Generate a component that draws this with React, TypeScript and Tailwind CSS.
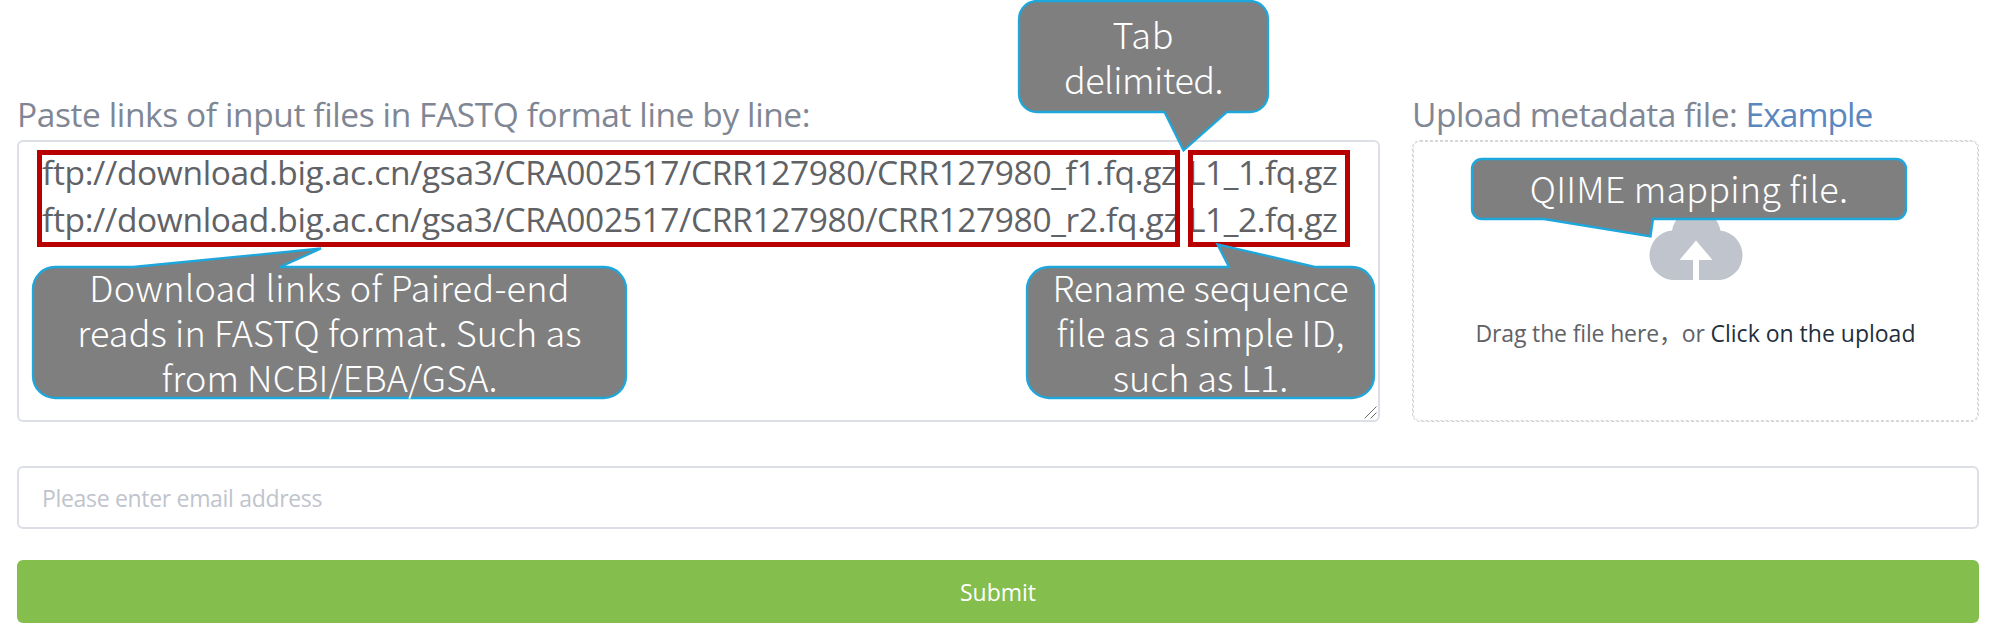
import React from "react";

type Line = { text: string; spacing?: string };

type CalloutProps = {
  frame: string;
  width: number;
  height: number;
  path: string;
  textClass: string;
  lines: Line[];
};

function Callout({ frame, width, height, path, textClass, lines }: CalloutProps) {
  return (
    <div className={`absolute ${frame}`}>
      <svg className="absolute left-0 top-0 overflow-visible" width={width} height={height}>
        <path d={path} fill="#7f7f7f" stroke="#1ea7dc" strokeWidth="2.3" />
      </svg>
      <div
        className={`relative flex flex-col items-center whitespace-nowrap font-['Noto_Sans_CJK_SC',sans-serif] text-[36px] font-light leading-[45px] text-white ${textClass}`}
      >
        {lines.map((l) => (
          <span key={l.text} className={l.spacing ?? ""}>
            {l.text}
          </span>
        ))}
      </div>
    </div>
  );
}

const rows = [
  ["ftp://download.big.ac.cn/gsa3/CRA002517/CRR127980/CRR127980_f1.fq.gz", "L1_1.fq.gz"],
  ["ftp://download.big.ac.cn/gsa3/CRA002517/CRR127980/CRR127980_r2.fq.gz", "L1_2.fq.gz"],
];

export default function App() {
  return (
    <div className="relative h-[636px] w-[2000px] overflow-hidden bg-white pl-[17px] pr-[21px] pt-[91px] font-['Open_Sans','Noto_Sans_CJK_SC',sans-serif] text-[#606266]">
      <div className="flex justify-between">
        <section className="w-[1363px]">
          <h2 className="mb-[2px] h-[47px] whitespace-nowrap text-[33.5px] leading-[47px] tracking-[-0.4px] text-[#7f8694]">
            Paste links of input files in FASTQ format line by line:
          </h2>
          <div className="relative h-[282px] rounded-[6px] border-2 border-[#dcdfe6] pl-[23px] pt-[6.5px] text-[33.5px] leading-[47.3px] tracking-[-0.36px]">
            {rows.map(([url, name]) => (
              <div key={url} className="flex whitespace-nowrap">
                <span className="w-[1146px]">{url}</span>
                <span className="tracking-[-0.45px]">{name}</span>
              </div>
            ))}
            <svg className="absolute bottom-0 right-0" width="15" height="15" viewBox="0 0 15 15">
              <path d="M1.5 13.5 13.5 1.5M7.5 13.5l6-6" stroke="#6b6b6b" strokeWidth="1" fill="none" />
            </svg>
          </div>
        </section>

        <section className="w-[567px]">
          <h2 className="mb-[2px] h-[47px] whitespace-nowrap text-[33.5px] leading-[47px] tracking-[-0.5px] text-[#7f8694]">
            Upload metadata file: <a className="tracking-[-0.95px] text-[#5b87bf]">Example</a>
          </h2>
          <div className="h-[282px] rounded-[8px] border border-dashed border-[#d4d4d4]">
            <div className="flex h-full flex-col items-center rounded-[7px] border border-dashed border-[#d9d9d9] pt-[63px]">
              <svg width="94" height="75" viewBox="0 0 94 75">
                <path
                  d="M23 25.5A24.5 24.5 0 0 1 71.400 25.5A24.800 24.800 0 0 1 93.500 50.500A24.700 24.700 0 0 1 71 75H50V55H63.500L47 35.500L30.500 55H44V75H23A24.700 24.700 0 0 1 0.500 50.500A24.800 24.800 0 0 1 23 25.5Z"
                  fill="#c0c4cc"
                />
              </svg>
              <p className="mt-[38px] whitespace-nowrap text-[23px] leading-[30px]">
                <span className="tracking-[-0.15px]">Drag the file here，or </span>
                <em className="not-italic text-[#1f2f3d]">Click on the upload</em>
              </p>
            </div>
          </div>
        </section>
      </div>

      <div className="mt-[44px] flex h-[63px] items-center rounded-[6px] border-2 border-[#dcdfe6] pl-[23px] pt-px text-[23px] tracking-[-0.32px] text-[#c0c4cc]">
        Please enter email address
      </div>
      <button className="mt-[31px] flex h-[63px] w-full items-center justify-center rounded-[6px] bg-[#84be4d] pt-[2px] text-[23px] text-white">
        Submit
      </button>

      <div className="absolute left-[37px] top-[150px] h-[97px] w-[1143px] border-[5px] border-[#b80000]" />
      <div className="absolute left-[1188px] top-[150px] h-[97px] w-[162px] border-[5px] border-[#b80000]" />

      <Callout
        frame="left-[1018px] top-0 h-[113px] w-[251px]"
        width={251}
        height={113}
        path="M19 1H232A18 18 0 0 1 250 19V94A18 18 0 0 1 232 112H209L165.500 150.500L146.500 112H19A18 18 0 0 1 1 94V19A18 18 0 0 1 19 1Z"
        textClass="pt-[11px]"
        lines={[{ text: "Tab", spacing: "tracking-[0.8px]" }, { text: "delimited.", spacing: "tracking-[-0.5px]" }]}
      />
      <Callout
        frame="left-[32px] top-[266px] h-[133px] w-[595px]"
        width={595}
        height={133}
        path="M23 1H101L289 -17.500L248 1H572A22 22 0 0 1 594 23V110A22 22 0 0 1 572 132H23A22 22 0 0 1 1 110V23A22 22 0 0 1 23 1Z"
        textClass="mt-[-2px]"
        lines={[
          { text: "Download links of Paired-end", spacing: "tracking-[0.2px]" },
          { text: "reads in FASTQ format. Such as", spacing: "tracking-[0.13px]" },
          { text: "from NCBI/EBA/GSA.", spacing: "tracking-[0.1px]" },
        ]}
      />
      <Callout
        frame="left-[1026px] top-[266px] h-[133px] w-[349px]"
        width={349}
        height={133}
        path="M23 1H203L191.500 -21.500L290 1H326A22 22 0 0 1 348 23V110A22 22 0 0 1 326 132H23A22 22 0 0 1 1 110V23A22 22 0 0 1 23 1Z"
        textClass="mt-[-2px]"
        lines={[
          { text: "Rename sequence", spacing: "tracking-[-0.1px]" },
          { text: "file as a simple ID," },
          { text: "such as L1." },
        ]}
      />
      <Callout
        frame="left-[1471px] top-[158px] h-[62px] w-[436px]"
        width={436}
        height={62}
        path="M11 1H425A10 10 0 0 1 435 11V51A10 10 0 0 1 425 61H182L179.500 78.500L73 61H11A10 10 0 0 1 1 51V11A10 10 0 0 1 11 1Z"
        textClass="pt-[7px]"
        lines={[{ text: "QIIME mapping file.", spacing: "tracking-[0.2px]" }]}
      />
    </div>
  );
}
